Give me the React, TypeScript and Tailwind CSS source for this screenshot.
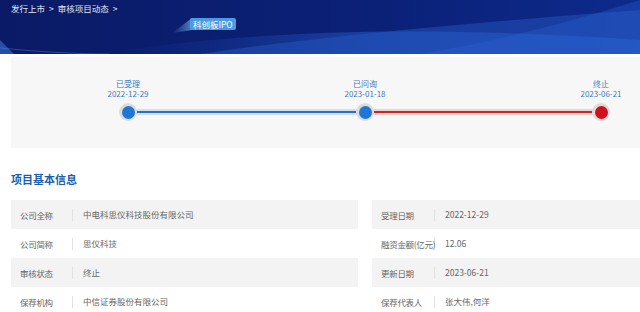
import React from "react";

const left = [
  ["公司全称", "中电科思仪科技股份有限公司"],
  ["公司简称", "思仪科技"],
  ["审核状态", "终止"],
  ["保荐机构", "中信证券股份有限公司"],
];
const right = [
  ["受理日期", "2022-12-29"],
  ["融资金额(亿元)", "12.06"],
  ["更新日期", "2023-06-21"],
  ["保荐代表人", "张大伟,何洋"],
];

function Table({ rows, labelW }: { rows: string[][]; labelW: string }) {
  return (
    <div className="flex flex-col">
      {rows.map((r, i) => (
        <div
          key={i}
          className={`flex items-center h-[29px] text-[8.5px] text-[#666] ${i % 2 === 0 ? "bg-[#f3f3f3]" : "bg-white"}`}
        >
          <div className={`${labelW} pl-[9px] shrink-0 whitespace-nowrap tracking-[-0.3px] border-r border-[#e2e2e2] leading-[12px]`}>{r[0]}</div>
          <div className="pl-[10px] whitespace-nowrap">{r[1]}</div>
        </div>
      ))}
    </div>
  );
}

function Node({ label, date, color }: { label: string; date: string; color: string }) {
  return (
    <div className="flex flex-col items-center w-[60px]">
      <div className="text-[8px] leading-[10px] text-[#3d7cc0]">{label}</div>
      <div className="text-[8px] leading-[10px] text-[#3d7cc0]">{date}</div>
      <div className="h-[4px]" />
      <div className="w-[18px] h-[18px] rounded-full bg-[#dcdcdc] flex items-center justify-center">
        <div className={`w-[13px] h-[13px] rounded-full ${color}`} />
      </div>
    </div>
  );
}

export default function App() {
  return (
    <div className="w-[640px] h-[312px] overflow-hidden bg-white" style={{ fontFamily: '"Noto Sans CJK SC", "Noto Sans", sans-serif' }}>
      {/* header */}
      <div className="relative h-[54px] bg-[#0b1d6e] overflow-hidden">
        <svg className="absolute inset-0" width="640" height="54" viewBox="0 0 640 54">
          <defs>
            <linearGradient id="bg" x1="0" y1="0" x2="1" y2="0">
              <stop offset="0" stopColor="#0a1a66" />
              <stop offset="0.6" stopColor="#0b2178" />
              <stop offset="1" stopColor="#0d2a8c" />
            </linearGradient>
            <linearGradient id="w1" x1="0" y1="0" x2="1" y2="0">
              <stop offset="0" stopColor="#1b44a8" stopOpacity="0" />
              <stop offset="0.5" stopColor="#2358c4" stopOpacity="0.8" />
              <stop offset="1" stopColor="#2a66d6" stopOpacity="0.9" />
            </linearGradient>
            <linearGradient id="st" x1="0" y1="0" x2="1" y2="0">
              <stop offset="0" stopColor="#6fb0f0" stopOpacity="0" />
              <stop offset="1" stopColor="#7cbdf5" stopOpacity="0.9" />
            </linearGradient>
          </defs>
          <rect width="640" height="54" fill="url(#bg)" />
          <path d="M100 54 C 250 30, 420 25, 640 40 L640 54 Z" fill="url(#w1)" opacity="0.7" />
          <path d="M200 54 C 330 35, 480 22, 640 10 L640 54 Z" fill="#2355c0" opacity="0.5" />
          <path d="M420 54 C 500 40, 560 25, 640 0 L640 54 Z" fill="#2a62d0" opacity="0.35" />
          <path d="M0 40 L14 54 L0 54 Z" fill="#3a6fd0" opacity="0.6" />
          <path d="M0 48 C 40 52, 80 54, 110 54" stroke="#5b8ee0" strokeWidth="1" fill="none" opacity="0.4" />
          <path d="M172 33 L192 18 L192 30 Z" fill="url(#st)" opacity="0.7" />
        </svg>
        <div className="relative pl-[11px] pt-[2px] text-[8.5px] text-white/90 flex items-center gap-[4px]">
          <span>发行上市</span>
          <span>&gt;</span>
          <span>审核项目动态</span>
          <span>&gt;</span>
        </div>
        <div className="absolute left-[190px] top-[18px] h-[12px] px-[3px] rounded-[2px] bg-[#4a9be0] text-white text-[8.5px] leading-[12px]">
          科创板IPO
        </div>
      </div>

      {/* timeline */}
      <div className="ml-[11px] mt-[3px] h-[91px] bg-[#f7f7f7] relative">
        <div className="absolute left-[117px] top-[52px] w-[237px] h-[6px] bg-[#cfe0f2]">
          <div className="mt-[2px] h-[2px] bg-[#2f6fb8]" />
        </div>
        <div className="absolute left-[354px] top-[52px] w-[236px] h-[6px] bg-[#f0cfcf]">
          <div className="mt-[2px] h-[2px] bg-[#c0282d]" />
        </div>
        <div className="absolute left-[87px] top-[22px]">
          <Node label="已受理" date="2022-12-29" color="bg-[#1f76d4]" />
        </div>
        <div className="absolute left-[324px] top-[22px]">
          <Node label="已问询" date="2023-01-18" color="bg-[#1f76d4]" />
        </div>
        <div className="absolute left-[560px] top-[22px]">
          <Node label="终止" date="2023-06-21" color="bg-[#d1101a]" />
        </div>
      </div>

      {/* title */}
      <div className="pl-[11px] mt-[23px] text-[11px] font-bold text-[#1b5eb0] leading-[16px]">项目基本信息</div>

      {/* tables */}
      <div className="mt-[13px] ml-[11px] flex gap-[14px]">
        <div className="w-[347px]">
          <Table rows={left} labelW="w-[62px]" />
        </div>
        <div className="flex-1">
          <Table rows={right} labelW="w-[63px]" />
        </div>
      </div>
    </div>
  );
}
